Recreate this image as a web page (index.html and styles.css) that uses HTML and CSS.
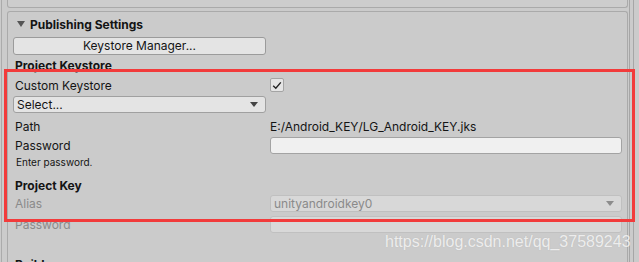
FILE: index.html
```html
<!DOCTYPE html>
<html>
<head>
<meta charset="utf-8">
<link rel="stylesheet" href="styles.css">
</head>
<body>
<div class="frame">
  <div class="main">
    <div class="prev-section"></div>
    <div class="section">
      <div class="header"><span class="fold"></span><span class="title">Publishing Settings</span></div>
      <div class="btn">Keystore Manager...</div>
      <div class="row bold">Project Keystore</div>
      <div class="row grid r-custom">
        <span class="label">Custom Keystore</span>
        <span class="check"><svg width="10" height="9" viewBox="0 0 10 9"><path d="M1.2 4.8 L3.8 7.3 L8.8 1.4" fill="none" stroke="#222" stroke-width="1.4"/></svg></span>
      </div>
      <div class="r-select"><div class="dropdown"><span>Select...</span><span class="arrow"></span></div></div>
      <div class="row grid r-path"><span class="label">Path</span><span class="value">E:/Android_KEY/LG_Android_KEY.jks</span></div>
      <div class="row grid r-pass"><span class="label">Password</span><span class="field"></span></div>
      <div class="hint">Enter password.</div>
      <div class="row bold r-key">Project Key</div>
      <div class="row grid r-alias"><span class="label dis">Alias</span><span class="field dd dis-field"><span>unityandroidkey0</span><span class="arrow light"></span></span></div>
      <div class="row grid r-pass2"><span class="label dis">Password</span><span class="field dis-field"></span></div>
      <div class="row bold r-build">Build</div>
    </div>
  </div>
  <div class="scroll"></div>
</div>
<div class="annot"></div>
<div class="watermark">https://blog.csdn.net/qq_37589243</div>
</body>
</html>
```
FILE: styles.css
```css
html, body {
  margin: 0;
  padding: 0;
}
body {
  width: 639px;
  height: 262px;
  overflow: hidden;
  background: #cbcbcb;
  font-family: Inter, "Noto Sans", sans-serif;
  font-size: 12px;
  color: #141414;
  position: relative;
}
.frame {
  display: flex;
  margin-left: 1px;
  border-left: 1px solid #ababab;
  padding-left: 5px;
  height: 262px;
  overflow: hidden;
}
.main {
  width: 621px;
  flex-shrink: 0;
  display: flex;
  flex-direction: column;
}
.main > *, .section > * {
  flex-shrink: 0;
}
.prev-section {
  height: 8px;
  box-sizing: border-box;
  border: 1px solid #aaaaaa;
  border-top: none;
  border-radius: 0 0 3px 3px;
  background: #cdcdcd;
}
.section {
  margin-top: 3px;
  border: 1px solid #aaaaaa;
  border-bottom: none;
  border-radius: 3px 3px 0 0;
  padding: 0 5px 0 5px;
  flex: 1 0 auto;
  display: flex;
  flex-direction: column;
}
.scroll {
  margin-left: 1px;
  width: 3px;
  flex-shrink: 0;
  border-left: 1px solid #a6a6a6;
  border-right: 1px solid #a6a6a6;
}
.header {
  height: 24px;
  display: flex;
  align-items: center;
  gap: 5px;
  padding-left: 4px;
  font-weight: 700;
}
.fold {
  width: 0;
  height: 0;
  border-left: 4px solid transparent;
  border-right: 4px solid transparent;
  border-top: 6px solid #555;
}
.btn {
  margin-top: 1px;
  width: 253px;
  height: 18px;
  box-sizing: border-box;
  border: 1px solid #9b9b9b;
  border-radius: 3px;
  background: #e4e4e4;
  text-align: center;
  line-height: 16px;
}
.row {
  height: 20px;
  display: flex;
  align-items: center;
  padding-left: 2px;
}
.bold { font-weight: 700; }
.grid {
  display: grid;
  grid-template-columns: 255px 1fr;
  align-items: center;
}
.check {
  width: 14px;
  height: 14px;
  box-sizing: border-box;
  border: 1px solid #a4a4a4;
  border-radius: 2px;
  background: #e5e5e5;
  display: flex;
  align-items: center;
  justify-content: center;
}
.r-custom { height: 20px; }
.r-select { height: 19px; padding-top: 1px; box-sizing: border-box; }
.dropdown {
  width: 253px;
  height: 17px;
  box-sizing: border-box;
  border: 1px solid #a0a0a0;
  border-radius: 3px;
  background: #e4e4e4;
  display: flex;
  align-items: center;
  justify-content: space-between;
  padding: 0 7px 0 3px;
}
.arrow {
  width: 0;
  height: 0;
  border-left: 4px solid transparent;
  border-right: 4px solid transparent;
  border-top: 5px solid #444;
}
.arrow.light { border-top-color: #8c8c8c; }
.r-path { height: 22px; padding-top: 2px; box-sizing: border-box; }
.r-pass { height: 18px; }
.field {
  height: 17px;
  box-sizing: border-box;
  border: 1px solid #a3a3a3;
  border-radius: 3px;
  background: #f0f0f0;
}
.hint {
  height: 17px;
  font-size: 10px;
  line-height: 17px;
  padding-left: 3px;
}
.r-key { margin-top: 4px; }
.r-alias { height: 17px; }
.r-pass2 { height: 22px; padding-top: 2px; box-sizing: border-box; }
.dis { color: #8a8a8a; }
.dis-field {
  background: #d8d8d8;
  border-color: #c0c0c0;
  color: #8a8a8a;
}
.dd {
  display: flex;
  align-items: center;
  justify-content: space-between;
  padding: 0 7px 0 3px;
}
.r-build { margin-top: 20px; }
.annot {
  position: absolute;
  left: 4px;
  top: 69px;
  width: 631px;
  height: 153px;
  box-sizing: border-box;
  border: 3px solid #f23b3b;
}
.watermark {
  position: absolute;
  left: 385px;
  top: 233px;
  font-family: "Liberation Sans", Arial, sans-serif;
  font-size: 16px;
  color: rgba(255, 255, 255, 0.75);
  text-shadow: 0 0 1px rgba(150, 150, 150, 0.4);
  white-space: nowrap;
}
```
